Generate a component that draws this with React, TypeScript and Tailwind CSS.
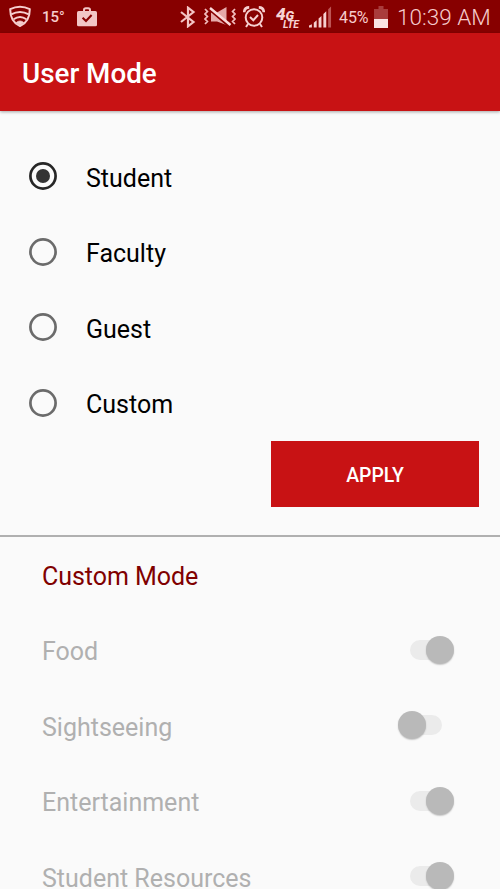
import type { ReactNode } from "react";

const modes = ["Student", "Faculty", "Guest", "Custom"];

const categories = [
  { name: "Food", on: true },
  { name: "Sightseeing", on: false },
  { name: "Entertainment", on: true },
  { name: "Student Resources", on: true },
];

function ShieldIcon() {
  return (
    <svg className="ml-[9px] h-[23px] w-[22px] shrink-0" viewBox="0 0 22 23" fill="none" stroke="#f6cfcf" strokeWidth="2">
      <path d="M1.2 4.2Q11 -0.8 20.8 4.2C20.8 13 17.2 18.4 11 21C4.8 18.4 1.2 13 1.2 4.2Z" strokeLinejoin="round" />
      <path d="M2.2 9.4Q11 4.6 19.8 9.4M4.6 14.2Q11 9.6 17.4 14.2" />
      <path d="M7.2 17.6Q11 14.4 14.8 17.6L11 20Z" fill="#f6cfcf" strokeWidth="0.8" />
    </svg>
  );
}

function BagIcon() {
  return (
    <svg className="ml-[10px] h-5 w-5 shrink-0" viewBox="0 0 20 20">
      <path d="M7 5V3Q7 1.2 8.8 1.2H11.2Q13 1.2 13 3V5" fill="none" stroke="#f2c6c6" strokeWidth="2" />
      <rect x="0" y="4" width="20" height="15.3" rx="1.6" fill="#f2c6c6" />
      <path d="M5.6 10.8L9 14L14.6 8" fill="none" stroke="#870000" strokeWidth="2" />
    </svg>
  );
}

function BluetoothIcon() {
  return (
    <svg className="ml-[83px] h-[22px] w-4 shrink-0" viewBox="0 0 16 22" fill="none" stroke="#f3c4c4" strokeWidth="2.2">
      <path d="M1 6L13.5 16L8 20.3V1.7L13.5 6L1 16" />
    </svg>
  );
}

function MutedIcon() {
  return (
    <svg className="ml-[8px] h-[22px] w-8 shrink-0" viewBox="0 0 32 22" fill="none">
      <path d="M7 6.5H13L22.5 1V19L13 15.5H7Z" fill="#e6aaaa" />
      <path d="M6.5 4.4L26 21" stroke="#870000" strokeWidth="2.4" />
      <path d="M6 2L26.5 19" stroke="#fbdada" strokeWidth="2.4" />
      <path d="M1 3L3.4 5.5L1 8L3.4 10.5L1 13L3.4 15.5L1 18M31 3L28.6 5.5L31 8L28.6 10.5L31 13L28.6 15.5L31 18" stroke="#f1bcbc" strokeWidth="1.8" />
    </svg>
  );
}

function AlarmIcon() {
  return (
    <svg className="ml-[7px] h-[22px] w-[22px] shrink-0" viewBox="0 0 22 22" fill="none" stroke="#f6d0d0" strokeWidth="2">
      <circle cx="11" cy="11.5" r="8.3" />
      <path d="M7 11L10.3 14.2L15 9M5 18L3 21M17 18L19 21" />
      <path d="M1.2 6.2Q1.4 1.5 6.2 1.4M20.8 6.2Q20.6 1.5 15.8 1.4" strokeWidth="2.6" />
    </svg>
  );
}

function NetworkLabel() {
  return (
    <div className="ml-[11px] flex h-[25px] w-[25px] shrink-0 flex-col pt-[4px] font-black italic text-[#f7d3d3]">
      <div className="flex h-[12px] items-baseline leading-[12px]">
        <span className="text-[17px] leading-[12px]">4</span>
        <span className="text-[13px] leading-[12px]">G</span>
      </div>
      <span className="pl-[7px] text-[10.5px] font-bold leading-[10px] tracking-[-0.2px]">LTE</span>
    </div>
  );
}

function SignalIcon() {
  return (
    <svg className="ml-[8px] h-[23px] w-[23px] shrink-0" viewBox="0 0 24 23">
      <g fill="#f6d0d0">
        <path d="M0 23V21L3 19.5V23ZM5 23V18L8 15.5V23ZM10 23V13.5L13 11V23ZM15 23V9L18 6V23Z" />
      </g>
      <path d="M20 23V4L23 1V23Z" fill="#bd5656" />
    </svg>
  );
}

function BatteryIcon() {
  return (
    <svg className="ml-[4px] h-[22px] w-[14px] shrink-0" viewBox="0 0 14 22">
      <path d="M4.5 0H9.5V3H14V13H0V3H4.5Z" fill="#a93c3c" />
      <rect y="13" width="14" height="9" fill="#fae3e3" />
    </svg>
  );
}

function StatusBar() {
  return (
    <div className="flex h-[33px] shrink-0 items-center bg-[#870000] text-[#f6cccc]">
      <ShieldIcon />
      <span className="ml-[11px] mt-[2px] w-[25px] text-[15px] font-medium leading-none">15°</span>
      <BagIcon />
      <BluetoothIcon />
      <MutedIcon />
      <AlarmIcon />
      <NetworkLabel />
      <SignalIcon />
      <span className="ml-[7px] mt-[3px] w-[31px] text-[16px] leading-none tracking-[-0.1px]">45%</span>
      <BatteryIcon />
      <span className="ml-[9px] mt-px whitespace-nowrap text-[22.5px] font-light leading-none">10:39 AM</span>
    </div>
  );
}

function Radio({ checked }: { checked: boolean }) {
  return (
    <svg className="-mt-px size-[28px] shrink-0" viewBox="0 0 28 28">
      <circle
        cx="14"
        cy="14"
        r="12.6"
        fill="none"
        strokeWidth="2.7"
        className={checked ? "stroke-[#262626]" : "stroke-[#6b6b6b]"}
      />
      {checked && <circle cx="14" cy="14" r="7" fill="#333333" />}
    </svg>
  );
}

function Toggle({ on }: { on: boolean }) {
  return (
    <span
      className={`-mt-[2px] flex h-5 w-[32px] shrink-0 items-center rounded-full bg-[#ebebeb] ${
        on ? "mr-[58px] justify-end" : "mr-[58px] justify-start"
      }`}
    >
      <span
        className={`size-[28px] shrink-0 rounded-full bg-[#b9b9b9] shadow-[0_1px_1.5px_rgba(0,0,0,0.2)] ${
          on ? "-mr-[12px]" : "-ml-[12px]"
        }`}
      />
    </span>
  );
}

function Row({ children }: { children: ReactNode }) {
  return <div className="flex h-[75.5px] shrink-0 items-center text-[25px] leading-[30px]">{children}</div>;
}

export default function App() {
  return (
    <div className="flex h-[889px] w-[500px] flex-col overflow-hidden bg-[#fafafa] font-[Roboto,sans-serif]">
      <StatusBar />
      <header className="flex h-[78px] shrink-0 items-center bg-[#c81214] pl-[22px] pt-[3px] text-[27.8px] font-medium text-white shadow-[0_1px_3px_rgba(0,0,0,0.35)]">
        User Mode
      </header>

      <section className="flex h-[424px] shrink-0 flex-col pt-[28px]">
        {modes.map((mode, i) => (
          <Row key={mode}>
            <label className="flex items-center pl-[29px] text-black">
              <Radio checked={i === 0} />
              <span className="ml-[29px] mt-[4px]">{mode}</span>
            </label>
          </Row>
        ))}
        <button className="mr-[21px] h-[66px] w-[208px] self-end bg-[#c81214] pt-[3px] text-[19.4px] font-medium text-white">
          APPLY
        </button>
      </section>

      <section className="flex flex-col border-t-2 border-[#b0b0b0]">
        <h2 className="flex h-[76px] shrink-0 items-center pl-[42px] pt-[3px] text-[25px] tracking-[-0.05px] text-[#800000]">
          Custom Mode
        </h2>
        {categories.map(({ name, on }) => (
          <Row key={name}>
            <span className="flex-1 pl-[42px] pt-[3px] text-[#b0b0b0]">{name}</span>
            <Toggle on={on} />
          </Row>
        ))}
      </section>
    </div>
  );
}
